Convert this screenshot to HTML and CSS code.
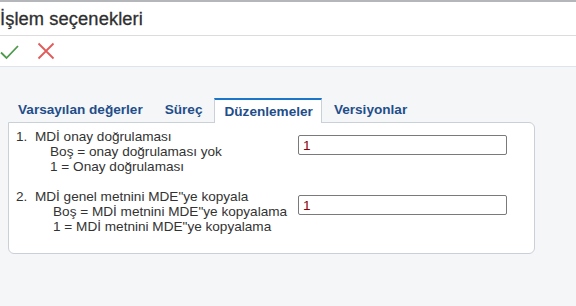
FILE: index.html
```html
<!DOCTYPE html>
<html lang="tr">
<head>
  <meta charset="UTF-8">
  <title>İşlem seçenekleri</title>
  <link rel="stylesheet" href="styles.css">
</head>
<body>
  <div class="page">
    <div class="header">
      <h1>İşlem seçenekleri</h1>
    </div>

    <div class="toolbar">
      <span class="tool ok" title="Tamam">
        <svg width="19" height="16" viewBox="0 0 19 16"><path d="M1 8.5 L6.5 14 L18 2" fill="none" stroke="#4c9a4c" stroke-width="1.8"/></svg>
      </span>
      <span class="tool cancel" title="İptal">
        <svg width="18" height="18" viewBox="0 0 18 18"><path d="M1.5 1.5 L16.5 16.5 M16.5 1.5 L1.5 16.5" fill="none" stroke="#e25a5a" stroke-width="1.8"/></svg>
      </span>
    </div>

    <div class="body">
      <div class="tabs">
        <div class="tab">Varsayılan değerler</div>
        <div class="tab">Süreç</div>
        <div class="tab active">Düzenlemeler</div>
        <div class="tab">Versiyonlar</div>
      </div>

      <div class="panel">
        <div class="option">
          <div class="option-text">
            <div>1.&nbsp; MDİ onay doğrulaması</div>
            <div class="sub">Boş = onay doğrulaması yok</div>
            <div class="sub">1 = Onay doğrulaması</div>
          </div>
          <input type="text" class="option-input" value="1">
        </div>

        <div class="option">
          <div class="option-text">
            <div>2.&nbsp; MDİ genel metnini MDE"ye kopyala</div>
            <div class="sub wide">Boş = MDİ metnini MDE"ye kopyalama</div>
            <div class="sub wide">1 = MDİ metnini MDE"ye kopyalama</div>
          </div>
          <input type="text" class="option-input" value="1">
        </div>
      </div>
    </div>
  </div>
</body>
</html>
```

FILE: styles.css
```css
body {
  margin: 0;
  font-family: 'Liberation Sans', Arial, sans-serif;
  color: #333333;
  background-color: #f5f6f8;
}
.page {
  width: 576px;
  height: 306px;
  border-top: 2px solid #b4b6ba;
  box-sizing: border-box;
}
.header {
  background-color: #ffffff;
  height: 33px;
  border-bottom: 1px solid #dcdcdc;
}
h1 {
  margin: 0;
  font-size: 18.3px;
  font-weight: normal;
  line-height: 33px;
  color: #2f2f2f;
  letter-spacing: 0.1px;
  -webkit-text-stroke: 0.3px #2f2f2f;
}
.toolbar {
  display: flex;
  align-items: center;
  gap: 18px;
  height: 30px;
  background-color: #ffffff;
  border-bottom: 1px solid #dfe4ea;
}
.tool {
  display: flex;
  align-items: center;
  cursor: pointer;
}
.tool.ok svg {
  margin-top: 1px;
}
.body {
  padding: 31px 0 0 8px;
}
.tabs {
  display: flex;
  align-items: flex-end;
  gap: 2px;
  height: 24px;
}
.tab {
  font-size: 13.6px;
  font-weight: bold;
  color: #1f4e8a;
  padding: 0 10px 5px 10px;
  cursor: pointer;
}
.tab.active {
  background-color: #ffffff;
  border-top: 2px solid #1b75c9;
  border-left: 1px solid #c9d0d8;
  border-right: 1px solid #c9d0d8;
  padding: 4px 8px 4px 9px;
  margin-bottom: -1px;
  position: relative;
  z-index: 1;
}
.panel {
  width: 527px;
  height: 132px;
  box-sizing: border-box;
  background-color: #ffffff;
  border: 1px solid #c9d0d8;
  border-radius: 0 6px 6px 6px;
  padding: 6px 0 0 7px;
}
.option {
  display: flex;
  align-items: flex-start;
  margin-bottom: 15px;
}
.option-text {
  width: 282px;
  font-size: 13.6px;
  line-height: 15px;
  color: #333333;
}
.option-text .sub {
  padding-left: 34px;
}
.option-text .sub.wide {
  padding-left: 37px;
}
.option-input {
  width: 209px;
  height: 20px;
  margin-top: 6px;
  box-sizing: border-box;
  border: 1px solid #7a7a7a;
  border-radius: 2px;
  padding: 0 4px;
  font-family: 'Liberation Sans', Arial, sans-serif;
  font-size: 13.6px;
  color: #8b0000;
}
```
